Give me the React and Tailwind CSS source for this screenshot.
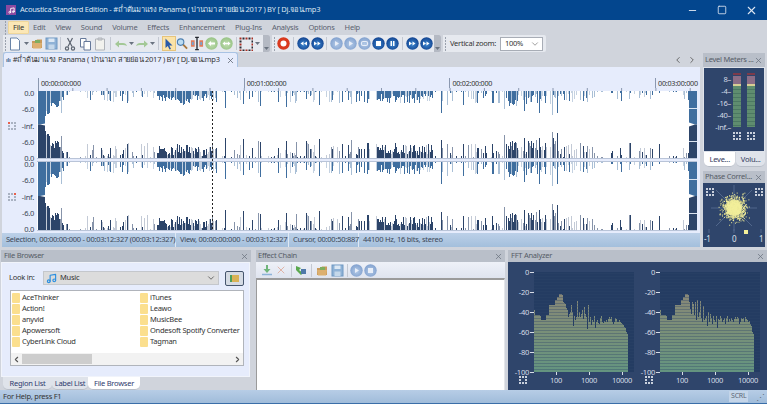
import { useId } from "react";
import { X, Minus, Square, ChevronDown, ChevronLeft, ChevronRight, Music } from "lucide-react";

const font = "font-['Noto_Sans','DejaVu_Sans',sans-serif] tracking-[-0.25px]";
const title = "#ถ่ำต้นมาแรง Panama ( ปานามา สายย่อน 2017 ) BY [ Dj.จอน.mp3";

// seeded noise so the wave form is the same on every load
function rng(seed) {
  let s = seed;
  return () => {
    s = (s * 16807) % 2147483647;
    return s / 2147483647;
  };
}

function buildBars(seed) {
  const r = rng(seed);
  const bars = [];
  let burst = 0;
  let on = false;
  for (let x = 8; x < 652; x++) {
    const abs = x + 37;
    const dense = abs < 212 && abs > 156;
    const mid = abs > 375 && abs < 433;
    const loud = abs > 502 && abs < 558;
    if (burst <= 0) {
      on = r() > 0.45;
      burst = 3 + Math.floor(r() * 9);
    }
    burst--;
    const dice = r();
    const tone = r();
    const size = r();
    const size2 = r();
    let top = 0;
    let bottom = 0;
    if (abs < 60) {
      top = abs < 50 ? 20 - (abs - 45) * 0.6 + size * 6 : 10 + size * 6;
      bottom = abs < 50 ? 24 - (abs - 45) * 1.2 + size * 4 : 10 + size2 * 8;
    } else if (dense) {
      top = 3 + size * 7 + (abs > 175 && abs < 190 ? 5 : 0);
      bottom = 2 + size2 * 10 + (abs > 175 && abs < 190 ? 3 : 0);
    } else if (mid) {
      top = 3 + size * 9;
      bottom = 3 + size2 * 11;
    } else if (loud) {
      if (dice > 0.3) {
        top = 3 + size * 12;
        bottom = 4 + size2 * 16;
      }
    } else if (on && dice > 0.55) {
      top = 1 + size * 11;
      bottom = 1 + size2 * 14;
    } else if (dice > 0.72) {
      bottom = 1 + Math.floor(size2 * 2);
      top = 1;
    }
    const solid = abs < 60 || tone > (dense || mid ? 0.2 : 0.55);
    bars.push({ x, top: Math.round(top), bottom: Math.round(bottom), solid, faint: tone < 0.3 });
  }
  return bars;
}

const spikes = [
  [61, 22, 22], [225, 17, 20], [243, 13, 19], [258, 11, 17], [260, 15, 16], [286, 16, 17], [296, 10, 16],
  [306, 8, 17], [319, 14, 19], [351, 13, 18], [367, 12, 15], [395, 10, 15], [447, 14, 14], [463, 14, 14],
  [492, 12, 14], [504, 18, 23], [524, 20, 20], [539, 22, 20], [552, 24, 26], [557, 22, 25], [583, 10, 12],
  [650, 8, 10], [441, 22, 18],
];

function Channel({ y, h, seed }) {
  const bars = buildBars(seed);
  return (
    <g>
      <rect x="0" y={y} width="660" height={h} fill="#fff" />
      {bars.map((b) => (
        <g key={b.x}>
          {b.top > 0 && (
            <rect x={b.x} y={y} width="1" height={b.top} fill={b.faint ? "#c5d2e1" : b.solid ? "#3f6e9f" : "#a9bfd6"} />
          )}
          {b.bottom > 0 && (
            <rect x={b.x} y={y + h - b.bottom} width="1" height={b.bottom} fill={b.faint ? "#c3cad6" : b.solid ? "#2c4469" : "#8794aa"} />
          )}
        </g>
      ))}
      {spikes.map(([abs, t, bt], i) => (
        <g key={i}>
          <rect x={abs - 37} y={y} width="1" height={t} fill={i % 3 === 0 ? "#a9bfd6" : "#3f6e9f"} />
          <rect x={abs - 37} y={y + h - bt} width="1" height={bt} fill={i % 3 === 0 ? "#8794aa" : "#2c4469"} />
        </g>
      ))}
      {/* start and end blocks */}
      <path d={`M1 ${y}H8V${y + h / 2 - 1}L3 ${y + h / 2}L1 ${y + h / 2}Z`} fill="#3f6e9f" />
      <path d={`M1 ${y + h}H8V${y + h / 2 + 1}L3 ${y + h / 2}L1 ${y + h / 2}Z`} fill="#2c4469" />
      <path d={`M652 ${y}H660V${y + h / 2}H658L652 ${y + h / 2 - 2}Z`} fill="#3f6e9f" />
      <path d={`M652 ${y + h}H660V${y + h / 2}H658L652 ${y + h / 2 + 2}Z`} fill="#2c4469" />
      <rect x="652" y={y + 17} width="8" height="1" fill="#dbe4f0" />
      <rect x="652" y={y + h - 17} width="8" height="1" fill="#dbe4f0" />
    </g>
  );
}

function Wave() {
  const ticks = [];
  for (let i = 0; i < 20; i++) ticks.push(1 + i * 34.3);
  return (
    <svg width="660" height="145" viewBox="0 0 660 145" className="block shrink-0">
      {ticks.map((t) => (
        <rect key={t} x={t} y="0" width="1" height="3" fill="#8b98b0" />
      ))}
      <Channel y={3} h={67} seed={4711} />
      <rect x="0" y="70" width="660" height="1" fill="#b9c4d8" />
      <rect x="0" y="73" width="660" height="1" fill="#b9c4d8" />
      <Channel y={74} h={68} seed={4711} />
      <rect x="0" y="142" width="660" height="1" fill="#b9c4d8" />
      <line x1="175.500" y1="3" x2="175.500" y2="142" stroke="#222" strokeDasharray="2 2" />
    </svg>
  );
}

function Dashes({ red = 0, className = "" }) {
  const pts = [[0, 0], [3, 0], [6, 0], [0, 3], [6, 3], [0, 6], [3, 6], [6, 6]];
  return (
    <svg width="8" height="8" viewBox="0 0 8 8" className={`shrink-0 ${className}`}>
      {pts.map(([x, y], i) => (
        <rect key={i} x={x} y={y} width="2" height="2" fill={i === red - 1 ? "#e8604c" : "#a9b2c2"} />
      ))}
    </svg>
  );
}

function LightDashes({ className = "" }) {
  const pts = [[0, 0], [3, 0], [6, 0], [0, 3], [6, 3], [0, 6], [3, 6], [6, 6]];
  return (
    <svg width="8" height="8" viewBox="0 0 8 8" className={`shrink-0 ${className}`}>
      {pts.map(([x, y], i) => (
        <rect key={i} x={x} y={y} width="2" height="2" fill="#c9d0dc" />
      ))}
    </svg>
  );
}

function Scale({ red, className = "" }) {
  return (
    <div className={`flex h-[75px] items-center shrink-0 ${className}`}>
      <Dashes red={red} className="ml-[6px]" />
      <div className="flex-1 h-full flex flex-col justify-between items-end pr-[3px] text-[7.500px] leading-[10px] text-[#3a4454]">
        <span>0.0</span>
        <span>-6.0</span>
        <span>-inf.</span>
        <span>-6.0</span>
        <span>0.0</span>
      </div>
    </div>
  );
}

function Round({ from, to, kind, light }) {
  const id = useId();
  const ink = light ? "#e8eef8" : "#fff";
  return (
    <svg width="13" height="13" viewBox="0 0 13 13">
      <defs>
        <radialGradient id={id} cx="50%" cy="55%" r="60%">
          <stop offset="0%" stopColor={from} />
          <stop offset="100%" stopColor={to} />
        </radialGradient>
      </defs>
      <circle cx="6.500" cy="6.500" r="6.200" fill={`url(#${id})`} />
      {kind === "rew" && <path d="M6.500 4.500L3.500 6.500L6.500 8.500ZM10 4.500L7 6.500L10 8.500Z" fill={ink} />}
      {kind === "fwd" && <path d="M3 4.500L6 6.500L3 8.500ZM6.500 4.500L9.500 6.500L6.500 8.500Z" fill={ink} />}
      {kind === "play" && <path d="M5 4L9 6.500L5 9Z" fill={ink} />}
      {kind === "loop" && <rect x="3.500" y="4.500" width="6" height="4" rx="1.500" fill="none" stroke={ink} strokeWidth="1.200" />}
      {kind === "stop" && <rect x="4" y="4" width="5" height="5" fill={ink} />}
      {kind === "pause" && <path d="M4.500 4H6V9H4.500ZM7 4H8.500V9H7Z" fill={ink} />}
      {kind === "left" && <path d="M3 6.500L6 4V5.500H10V7.500H6V9Z" fill={ink} />}
      {kind === "both" && <path d="M2.500 6.500L5 4.500V8.500ZM10.500 6.500L8 4.500V8.500ZM5 5.700H8V7.300H5Z" fill={ink} />}
    </svg>
  );
}

const Blue = ({ kind }) => <Round from="#3f8ad2" to="#0d3c8a" kind={kind} />;
const Pale = ({ kind }) => <Round from="#b4cbe8" to="#7d9dcc" kind={kind} light />;
const Green = ({ kind }) => <Round from="#c2dfb2" to="#93c081" kind={kind} />;

function Record() {
  return (
    <svg width="13" height="13" viewBox="0 0 13 13">
      <circle cx="6.500" cy="6.500" r="6.200" fill="#d9391e" />
      <circle cx="6.500" cy="6.500" r="3" fill="#fff" />
    </svg>
  );
}

function NewDoc() {
  return (
    <svg width="12" height="14" viewBox="0 0 12 14">
      <path d="M1.500 1H8L10.500 3.500V13H1.500Z" fill="#fff" stroke="#6a85a8" />
    </svg>
  );
}

function OpenIcon() {
  return (
    <svg width="13" height="13" viewBox="0 0 13 13">
      <path d="M1 4H5L6 2.500H11V11H1Z" fill="#c99a5c" />
      <path d="M4 3H9V9H4Z" fill="#7fae5f" />
      <path d="M1 6H11L10 11.500H2Z" fill="#dcb070" />
    </svg>
  );
}

function SaveIcon() {
  return (
    <svg width="13" height="13" viewBox="0 0 13 13">
      <rect x="1" y="1" width="11" height="11" fill="#8fb2d6" stroke="#6f98c2" />
      <rect x="3.500" y="1.500" width="6" height="3.500" fill="#dce8f4" />
      <rect x="3.500" y="7.500" width="6" height="4.500" fill="#c5d8ea" />
    </svg>
  );
}

function CutIcon() {
  return (
    <svg width="12" height="14" viewBox="0 0 12 14" fill="none" stroke="#5c6470" strokeWidth="1.200">
      <path d="M3.500 1L8 9.500M8.500 1L4 9.500" />
      <circle cx="3" cy="11.500" r="1.600" />
      <circle cx="9" cy="11.500" r="1.600" />
    </svg>
  );
}

function CopyIcon() {
  return (
    <svg width="13" height="14" viewBox="0 0 13 14" fill="#fff" stroke="#66799a">
      <path d="M1.500 1.500H7V10H1.500Z" />
      <path d="M5 4.500H11.500V13H5Z" />
    </svg>
  );
}

function PasteIcon() {
  return (
    <svg width="12" height="14" viewBox="0 0 12 14" fill="#f2f2ee" stroke="#b0b4ba">
      <path d="M1.500 2H10.500V13H1.500Z" />
      <path d="M4 1H8V3H4Z" fill="#d0d2d6" />
    </svg>
  );
}

function Arrow({ flip }) {
  return (
    <svg width="14" height="10" viewBox="0 0 14 10" className={flip ? "-scale-x-100" : ""}>
      <path d="M1 5L5 1.500V4H9Q12 4 13 7Q11 6 9 6H5V8.500Z" fill="#a3c896" />
    </svg>
  );
}

function Pointer() {
  return (
    <div className="w-[14px] h-[15px] flex items-center justify-center bg-[#fbe3a8] border border-[#e6c47c]">
      <svg width="10" height="12" viewBox="0 0 10 12">
        <path d="M1.500 0.500L8.500 7.500H5.300L7 11L5.500 11.500L3.800 8L1.500 10Z" fill="#2a5aa8" />
      </svg>
    </div>
  );
}

function Zoomer() {
  return (
    <svg width="13" height="13" viewBox="0 0 13 13">
      <path d="M7 7L12 12" stroke="#a8763c" strokeWidth="2" />
      <circle cx="5" cy="5" r="3.500" fill="#bcdcf2" stroke="#4c7fb0" strokeWidth="1.200" />
    </svg>
  );
}

function SpanTool() {
  return (
    <svg width="15" height="15" viewBox="0 0 15 15">
      <path d="M1 4H5V11H1ZM10 4H14V11H10Z" fill="#e07c5c" />
      <path d="M2 6H4V9H2ZM11 6H13V9H11Z" fill="#7ba2cb" />
      <path d="M5.500 1H9.500M5.500 14H9.500M7.500 1V14" stroke="#22262e" strokeWidth="1.400" fill="none" />
    </svg>
  );
}

function GridTool() {
  const pts = [0, 1, 2, 3, 4];
  return (
    <svg width="14" height="14" viewBox="0 0 14 14">
      {pts.map((a) =>
        pts.map((b) =>
          a === 0 || a === 4 || b === 0 || b === 4 ? (
            <rect key={`${a}-${b}`} x={a * 3 + 0.5} y={b * 3 + 0.5} width="2" height="2" fill={(a + b) % 2 ? "#2b2b33" : "#a83024"} />
          ) : null,
        ),
      )}
    </svg>
  );
}

const Drop = ({ className = "" }) => (
  <svg width="5" height="3" viewBox="0 0 5 3" className={className}>
    <path d="M0 0H5L2.500 3Z" fill="#6a7380" />
  </svg>
);

const Slot = ({ className = "w-[14px]", children }) => (
  <div className={`${className} h-[17px] flex items-center justify-center shrink-0`}>{children}</div>
);

const Sep = ({ className = "w-[5px]" }) => (
  <div className={`${className} h-[17px] flex items-center justify-center shrink-0`}>
    <div className="w-px h-[13px] bg-[#c3c8d2]" />
  </div>
);

const Grip = () => (
  <div className="w-[5px] h-[17px] flex flex-col items-center justify-center gap-[1px] shrink-0">
    {[0, 1, 2, 3, 4].map((i) => (
      <div key={i} className="w-px h-[2px] bg-[#9aa1ad]" />
    ))}
  </div>
);

const Handle = () => (
  <div className="w-[7px] h-[17px] ml-auto bg-[#b4b9c3] flex items-end justify-center pb-[2px] rounded-r-[2px]">
    <Drop />
  </div>
);

function Toolbars() {
  return (
    <div className="flex h-[17px] shrink-0 bg-[#d0d4dc]">
      <div className="ml-[3px] w-[267px] flex bg-[#e6e9ef] rounded-r-[2px]">
        <Grip />
        <Slot><NewDoc /></Slot>
        <Slot className="w-[8px]"><Drop /></Slot>
        <Slot><OpenIcon /></Slot>
        <Slot><SaveIcon /></Slot>
        <Sep />
        <Slot><CutIcon /></Slot>
        <Slot className="w-[14px] ml-px"><CopyIcon /></Slot>
        <Slot className="w-[14px] ml-px"><PasteIcon /></Slot>
        <Sep className="w-[7px]" />
        <Slot><Arrow /></Slot>
        <Slot className="w-[7px]"><Drop /></Slot>
        <Slot><Arrow flip /></Slot>
        <Slot className="w-[6px]"><Drop /></Slot>
        <Sep className="w-[7px]" />
        <Slot><Pointer /></Slot>
        <Slot className="w-[12px]"><Zoomer /></Slot>
        <Slot className="w-[14px] ml-[2px]"><SpanTool /></Slot>
        <Slot><Green kind="left" /></Slot>
        <Slot className="w-[14px] ml-px"><Green kind="both" /></Slot>
        <Sep className="w-[6px]" />
        <Slot><GridTool /></Slot>
        <Slot className="w-[8px]"><Drop /></Slot>
        <Handle />
      </div>
      <div className="ml-[2px] w-[169px] flex bg-[#e6e9ef] rounded-r-[2px]">
        <Grip />
        <Slot className="w-[13px]"><Record /></Slot>
        <Sep className="w-[6px]" />
        <Slot><Blue kind="rew" /></Slot>
        <Slot><Blue kind="fwd" /></Slot>
        <Sep />
        <Slot><Pale kind="play" /></Slot>
        <Slot><Pale kind="play" /></Slot>
        <Slot><Pale kind="loop" /></Slot>
        <Slot><Blue kind="stop" /></Slot>
        <Slot><Blue kind="pause" /></Slot>
        <Sep className="w-[6px]" />
        <Slot><Blue kind="fwd" /></Slot>
        <Slot><Blue kind="fwd" /></Slot>
        <Handle />
      </div>
      <div className="ml-[2px] w-[103px] flex items-center bg-[#e6e9ef] rounded-r-[2px]">
        <Grip />
        <span className="ml-[2px] w-[49px] text-[7.500px] whitespace-nowrap text-[#333]">Vertical zoom:</span>
        <div className="ml-px w-[43px] h-[14px] flex items-center justify-between pl-[4px] pr-[2px] bg-white border border-[#a8adb6] text-[7.500px] text-[#333]">
          100%
          <ChevronDown size={10} strokeWidth={1.5} className="text-[#666]" />
        </div>
      </div>
    </div>
  );
}

const menus = ["Edit", "View", "Sound", "Volume", "Effects", "Enhancement", "Plug-Ins", "Analysis", "Options", "Help"];

function Document() {
  return (
    <div className="w-[698px] ml-[2px] flex flex-col shrink-0">
      <div className="h-[15px] flex items-end justify-between">
        <div className="ml-px w-[235px] h-[15px] flex items-center gap-[2px] px-[2px] bg-[#e6ecfc] border border-b-0 border-[#a9c3e4] rounded-t-[3px] text-[7.500px] text-[#333] whitespace-nowrap overflow-hidden">
          <span className="text-[#4a6b94] text-[6px] font-bold leading-none">ılı</span>
          <span className="flex-1">{title}</span>
          <X size={9} className="text-[#5c6470] shrink-0" />
        </div>
        <div className="flex gap-[4px] mr-[3px] mb-[2px] text-[#555]">
          <ChevronLeft size={10} />
          <ChevronRight size={10} />
        </div>
      </div>
      <div className="h-[166px] bg-[#e6ecfc] flex flex-col">
        <div className="h-[21px] flex items-end pl-[36px] text-[7.200px] leading-[10px] text-[#333] shrink-0 overflow-hidden">
          {["00:00:00:000", "00:01:00:000", "00:02:00:000", "00:03:00:000"].map((t) => (
            <div key={t} className="w-[205.700px] h-[10px] border-l border-[#8b98b0] pl-[2px] whitespace-nowrap shrink-0">
              {t}
            </div>
          ))}
        </div>
        <div className="flex">
          <div className="w-[35px] h-[145px] shrink-0 flex flex-col">
            <Scale red={1} />
            <Scale red={3} className="-mt-[4px]" />
          </div>
          <Wave />
        </div>
      </div>
      <div className="h-[14px] flex gap-[2px] bg-gradient-to-b from-[#bcd0e8] to-[#a3bfdc] text-[7.500px] leading-[13px] text-[#3c4656] whitespace-nowrap">
        <div className="w-[174px] pl-[4px] border-r border-[#dfe8f3]">Selection, 00:00:00:000 - 00:03:12:327 (00:03:12:327)</div>
        <div className="w-[111px] pl-[2px] border-r border-[#dfe8f3]">View, 00:00:00:000 - 00:03:12:327</div>
        <div className="w-[68px] pl-[2px] border-r border-[#dfe8f3]">Cursor, 00:00:50:887</div>
        <div className="pl-[2px]">44100 Hz, 16 bits, stereo</div>
      </div>
    </div>
  );
}

function PanelHead({ label, className = "" }) {
  return (
    <div className={`h-[12px] flex items-center justify-between pl-[2px] pr-[2px] bg-[#b9bfc9] text-[7.500px] text-[#555b66] shrink-0 whitespace-nowrap overflow-hidden ${className}`}>
      {label}
      <X size={9} strokeWidth={2} className="text-[#6c7480] shrink-0" />
    </div>
  );
}

function Meter() {
  return (
    <div className="w-[8px] h-[54px] flex flex-col">
      <div className="h-[2px] bg-[#7d3a4a]" />
      <div className="h-px" />
      <div className="h-[8px] bg-[#8b6d86]" />
      <div className="h-[2px] bg-[#d8cf94]" />
      <div className="flex-1 bg-[repeating-linear-gradient(to_bottom,#5f8d6f_0px,#5f8d6f_3px,#4c7862_3px,#4c7862_4px)]" />
    </div>
  );
}

function LevelPanel() {
  return (
    <div className="h-[85px] bg-[#2f456b] border border-[#dfe3ea] flex flex-col pt-[5px] text-[7.500px] text-[#d5dbe6] shrink-0">
      <div className="flex">
        <div className="w-[27px] h-[54px] flex flex-col text-right leading-[12px]">
          <span>8–</span>
          <span>-4–</span>
          <span>-16–</span>
          <span>-40–</span>
          <span>-inf.–</span>
        </div>
        <div className="ml-[2px] flex gap-[6px]">
          <Meter />
          <Meter />
        </div>
      </div>
      <div className="flex gap-[6px] ml-[29px] mt-[5px]">
        <LightDashes />
        <LightDashes />
      </div>
    </div>
  );
}

function LevelTabs() {
  return (
    <div className="h-[15px] flex text-[7.500px] text-[#333a5c] shrink-0">
      <div className="w-[32px] ml-[1px] text-center leading-[14px] bg-white rounded-b-[5px] border-b border-[#b8bec8]">Leve...</div>
      <div className="w-[29px] ml-[1px] text-center leading-[14px] bg-[#dfe3ea] rounded-b-[5px] border-b border-[#b8bec8]">Volu...</div>
    </div>
  );
}

function PhaseDots() {
  const r = rng(99);
  const bell = () => (r() + r() + r() + r()) / 4 - 0.5;
  const dots = [];
  for (let i = 0; i < 900; i++) {
    dots.push([31 + bell() * 38, 25 + bell() * 38]);
  }
  return (
    <svg width="62" height="64" viewBox="0 0 62 64" className="block">
      <g stroke="#51678c" strokeWidth="1">
        <line x1="31" y1="2" x2="31" y2="48" />
        <line x1="8" y1="25" x2="54" y2="25" />
        <line x1="13" y1="7" x2="49" y2="43" />
        <line x1="49" y1="7" x2="13" y2="43" />
        <line x1="6" y1="46" x2="6" y2="50" />
        <line x1="31" y1="46" x2="31" y2="50" />
        <line x1="58" y1="46" x2="58" y2="50" />
      </g>
      {dots.map(([x, y], i) => (
        <rect key={i} x={x} y={y} width="1" height="1" fill={i % 5 ? "#f2ee9a" : "#c7c47e"} />
      ))}
      <circle cx="31" cy="25" r="8" fill="#f2ee9a" opacity="0.85" />
      <rect x="41" y="47" width="4" height="4" fill="#f4f09a" />
      <g fill="#c9d0dc">
        {[[3, 5], [6, 5], [9, 5], [3, 8], [9, 8], [3, 11], [6, 11], [9, 11], [52, 5], [55, 5], [58, 5], [52, 8], [58, 8], [52, 11], [55, 11], [58, 11]].map(([x, y]) => (
          <rect key={`${x}-${y}`} x={x} y={y} width="2" height="2" />
        ))}
      </g>
      <g fill="#dfe4ee" fontSize="8" fontFamily="Noto Sans, sans-serif">
        <text x="1" y="59">-1</text>
        <text x="29" y="59">0</text>
        <text x="56" y="59">1</text>
      </g>
    </svg>
  );
}

function Sidebar() {
  return (
    <div className="ml-[3px] w-[62px] pt-px flex flex-col shrink-0">
      <PanelHead label="Level Meters ..." className="h-[14px]" />
      <LevelPanel />
      <LevelTabs />
      <div className="h-[4px] shrink-0" />
      <PanelHead label="Phase Correl..." />
      <div className="h-[64px] bg-[#2f456b] shrink-0">
        <PhaseDots />
      </div>
    </div>
  );
}

const folders = [
  ["AceThinker", "iTunes"],
  ["Action!", "Leawo"],
  ["anyvid", "MusicBee"],
  ["Apowersoft", "Ondesoft Spotify Converter"],
  ["CyberLink Cloud", "Tagman"],
];

const Folder = ({ name }) => (
  <div className="w-[128px] h-[11px] flex items-center gap-[2px] shrink-0">
    <div className="w-[8px] h-[10px] bg-[#fbdf8e] rounded-[1px] shrink-0" />
    <span className="whitespace-nowrap">{name}</span>
  </div>
);

function FileBrowser() {
  return (
    <div className="w-[251px] flex flex-col shrink-0">
      <PanelHead label="File Browser" className="ml-px pl-[3px]" />
      <div className="h-[115px] mx-px bg-[#e6ecfc] border border-[#f1f4fb] flex flex-col shrink-0 text-[7.500px] text-[#333]">
        <div className="mt-[8px] h-[14px] flex items-center">
          <span className="ml-[7px] w-[34px]">Look in:</span>
          <div className="w-[176px] h-[14px] flex items-center bg-[#dcdcdc] border border-[#c4c7cc] pl-[2px] pr-[2px]">
            <Music size={11} strokeWidth={2.5} className="text-[#2b8fe0] shrink-0" />
            <span className="ml-[3px] flex-1">Music</span>
            <ChevronDown size={10} className="text-[#555]" />
          </div>
          <div className="ml-[6px] w-[19px] h-[15px] flex items-center justify-center bg-[#d5dbe4] border border-[#46566e] rounded-[2px]">
            <div className="w-[9px] h-[7px] bg-[#d9b257] border-l-2 border-[#4ea05c]" />
          </div>
        </div>
        <div className="mt-[5px] ml-[8px] w-[234px] h-[76px] bg-white border border-[#b0b4bb] flex flex-col">
          <div className="h-[62px] flex flex-col pt-px pl-px text-[7.500px] leading-[11px]">
            {folders.map(([a, b]) => (
              <div key={a} className="flex">
                <Folder name={a} />
                <Folder name={b} />
              </div>
            ))}
          </div>
          <div className="h-[12px] flex items-center bg-[#f2f2f2] text-[#555]">
            <ChevronLeft size={9} strokeWidth={3} className="w-[11px] shrink-0" />
            <div className="w-[70px] h-[10px] bg-[#cdcdcd]" />
            <ChevronRight size={9} strokeWidth={3} className="ml-auto mr-[1px]" />
          </div>
        </div>
      </div>
      <div className="h-[13px] flex items-start pl-[3px] text-[7.500px] leading-[12px] text-[#2e3a6e] whitespace-nowrap">
        <div className="w-[49px] text-center rounded-b-[5px] bg-[#dfe3ea] border-b border-[#b8bec8]">Region List</div>
        <div className="w-[36px] text-center rounded-b-[5px] bg-[#dfe3ea] border-b border-[#b8bec8]">Label List</div>
        <div className="w-[52px] text-center rounded-b-[5px] bg-white border-b border-[#b8bec8]">File Browser</div>
      </div>
    </div>
  );
}

function EffectChain() {
  return (
    <div className="ml-[5px] w-[249px] flex flex-col shrink-0">
      <PanelHead label="Effect Chain" />
      <div className="h-[16px] flex items-center pl-[5px] bg-gradient-to-b from-[#eef1f8] to-[#dfe4ef] shrink-0">
        <svg width="12" height="12" viewBox="0 0 12 12">
          <path d="M5 1H7V5H9.500L6 9L2.500 5H5Z" fill="#6fb57a" />
          <path d="M1 10.500H11" stroke="#8db3d8" strokeWidth="1.500" />
        </svg>
        <X size={12} strokeWidth={1.5} className="ml-[2px] text-[#dca08c]" />
        <Sep className="w-[8px]" />
        <svg width="12" height="12" viewBox="0 0 12 12">
          <path d="M1 2L6 4L4 6L8 9L6 11L1 6Z" fill="#5aa84e" />
          <path d="M6 5H11V10H6Z" fill="#4f79a8" />
        </svg>
        <Sep className="w-[9px]" />
        <OpenIcon />
        <div className="w-[2px]" />
        <SaveIcon />
        <Sep className="w-[6px]" />
        <Pale kind="play" />
        <div className="w-px" />
        <Pale kind="stop" />
      </div>
      <div className="h-[112px] bg-white border-t-2 border-l border-r border-[#9b9b9b] border-r-[#e4e6ea]" />
    </div>
  );
}

const spectrumA = [38,43,43,43,43,43,44,48,48,48,48,48,43,43,43,33,33,33,33,33,33,28,28,25,25,22,22,22,23,30,31,32,36,38,45,42,40,33,40,54,44,48,45,29,45,40,45,42,38,47,35,42,45,57,33,50,45,53,48,50,44,56,50,48,51,52,46,44,50,51,49,50,48,50,47,45,47,45,50,52,50,46,47,50,50,48,50,51,52,53,55,56,60,62];
const spectrumB = [38,43,43,43,43,43,44,48,48,48,48,48,43,43,43,33,33,33,33,33,33,28,28,25,25,22,22,22,23,30,37,42,30,32,43,30,48,28,45,40,29,46,50,34,48,46,44,54,40,50,42,46,52,44,48,50,44,56,47,48,44,46,50,48,46,52,46,44,50,47,49,46,48,50,47,45,47,45,46,52,50,46,47,46,50,45,47,48,50,49,52,54,60,62];

function Spectrum({ bars }) {
  const id = useId();
  const ticks = [0, 20, 40, 60, 80, 100];
  const lines = [];
  for (let y = 1; y < 100; y += 3) lines.push(y);
  return (
    <svg width="126" height="129" viewBox="0 0 126 129" className="block shrink-0">
      <defs>
        <linearGradient id={id} gradientUnits="userSpaceOnUse" x1="0" y1="24" x2="0" y2="110">
          <stop offset="0%" stopColor="#8a8578" />
          <stop offset="50%" stopColor="#7a8f78" />
          <stop offset="100%" stopColor="#649480" />
        </linearGradient>
      </defs>
      <rect x="26" y="10" width="100" height="100" fill="#243c62" />
      {bars.map((t, i) => (
        <rect key={i} x={26 + i} y={10 + t} width="1" height={100 - t} fill={`url(#${id})`} />
      ))}
      {lines.map((y) => (
        <rect key={y} x="26" y={10 + y} width="100" height="1" fill="#2f456b" opacity="0.35" />
      ))}
      {ticks.map((t) => (
        <g key={t}>
          <rect x="22" y={10 + t} width="4" height="1" fill="#d7dce6" />
          <text x="21" y={13 + t} textAnchor="end" fontSize="7.500" fill="#d7dce6" fontFamily="Noto Sans, sans-serif">
            {t === 0 ? "0" : `-${t}`}
          </text>
        </g>
      ))}
      {[[48, "100"], [81, "1000"], [114, "10000"]].map(([x, l]) => (
        <g key={l}>
          <rect x={x} y="110" width="1" height="3" fill="#d7dce6" />
          <text x={x} y="121" textAnchor="middle" fontSize="7.500" fill="#d7dce6" fontFamily="Noto Sans, sans-serif">
            {l}
          </text>
        </g>
      ))}
    </svg>
  );
}

function FftPanel() {
  return (
    <div className="ml-[3px] flex-1 flex flex-col">
      <PanelHead label="FFT Analyzer" className="pl-[3px]" />
      <div className="h-[129px] bg-[#2f456b] flex relative overflow-hidden">
        <Spectrum bars={spectrumA} />
        <Spectrum bars={spectrumB} />
        <LightDashes className="absolute left-[11px] top-[114px]" />
        <LightDashes className="absolute left-[137px] top-[114px]" />
      </div>
    </div>
  );
}

export default function App() {
  return (
    <div className={`w-[767px] h-[404px] flex flex-col overflow-hidden bg-[#d0d4dc] ${font}`}>
      <div className="h-[20px] flex items-center bg-[#03468e] text-[#dde6f2] shrink-0">
        <div className="ml-[6px] w-[10px] h-[10px] bg-[#8a4aa0] flex items-center justify-center shrink-0">
          <Music size={7} strokeWidth={3} className="text-white" />
        </div>
        <span className="ml-[4px] text-[7.500px] whitespace-nowrap">Acoustica Standard Edition - {title}</span>
        <div className="ml-auto flex items-center">
          <div className="w-[30px] flex justify-center"><Minus size={11} /></div>
          <div className="w-[30px] flex justify-center"><Square size={10} /></div>
          <div className="w-[29px] flex justify-center mr-[1px]"><X size={13} /></div>
        </div>
      </div>
      <div className="h-[15px] flex items-center pl-[3px] text-[7.500px] text-[#5b6270] shrink-0">
        <Grip />
        <div className="w-[21px] h-[13px] flex items-center justify-center bg-[#fbe7b6] border border-[#f0d79a] text-[#333] rounded-[1px]">File</div>
        <div className="flex -ml-px">
          {menus.map((m) => (
            <span key={m} className="px-[5px]">{m}</span>
          ))}
        </div>
      </div>
      <Toolbars />
      <div className="flex h-[195px] shrink-0">
        <Document />
        <Sidebar />
      </div>
      <div className="h-[3px] shrink-0" />
      <div className="flex h-[140px] shrink-0">
        <FileBrowser />
        <EffectChain />
        <FftPanel />
      </div>
      <div className="h-[14px] flex items-center justify-between pl-[3px] bg-gradient-to-b from-[#b7cde6] to-[#a0bcda] border-b border-[#3a6ea8] text-[7.500px] text-[#333] shrink-0">
        For Help, press F1
        <div className="flex items-center mr-[3px]">
          <span className="w-[19px] text-center bg-[#c4d5e9] text-[7px] text-[#5b6878] mr-[8px]">SCRL</span>
          <span className="text-[8px] text-[#5b6878] leading-none">⋰</span>
        </div>
      </div>
    </div>
  );
}
